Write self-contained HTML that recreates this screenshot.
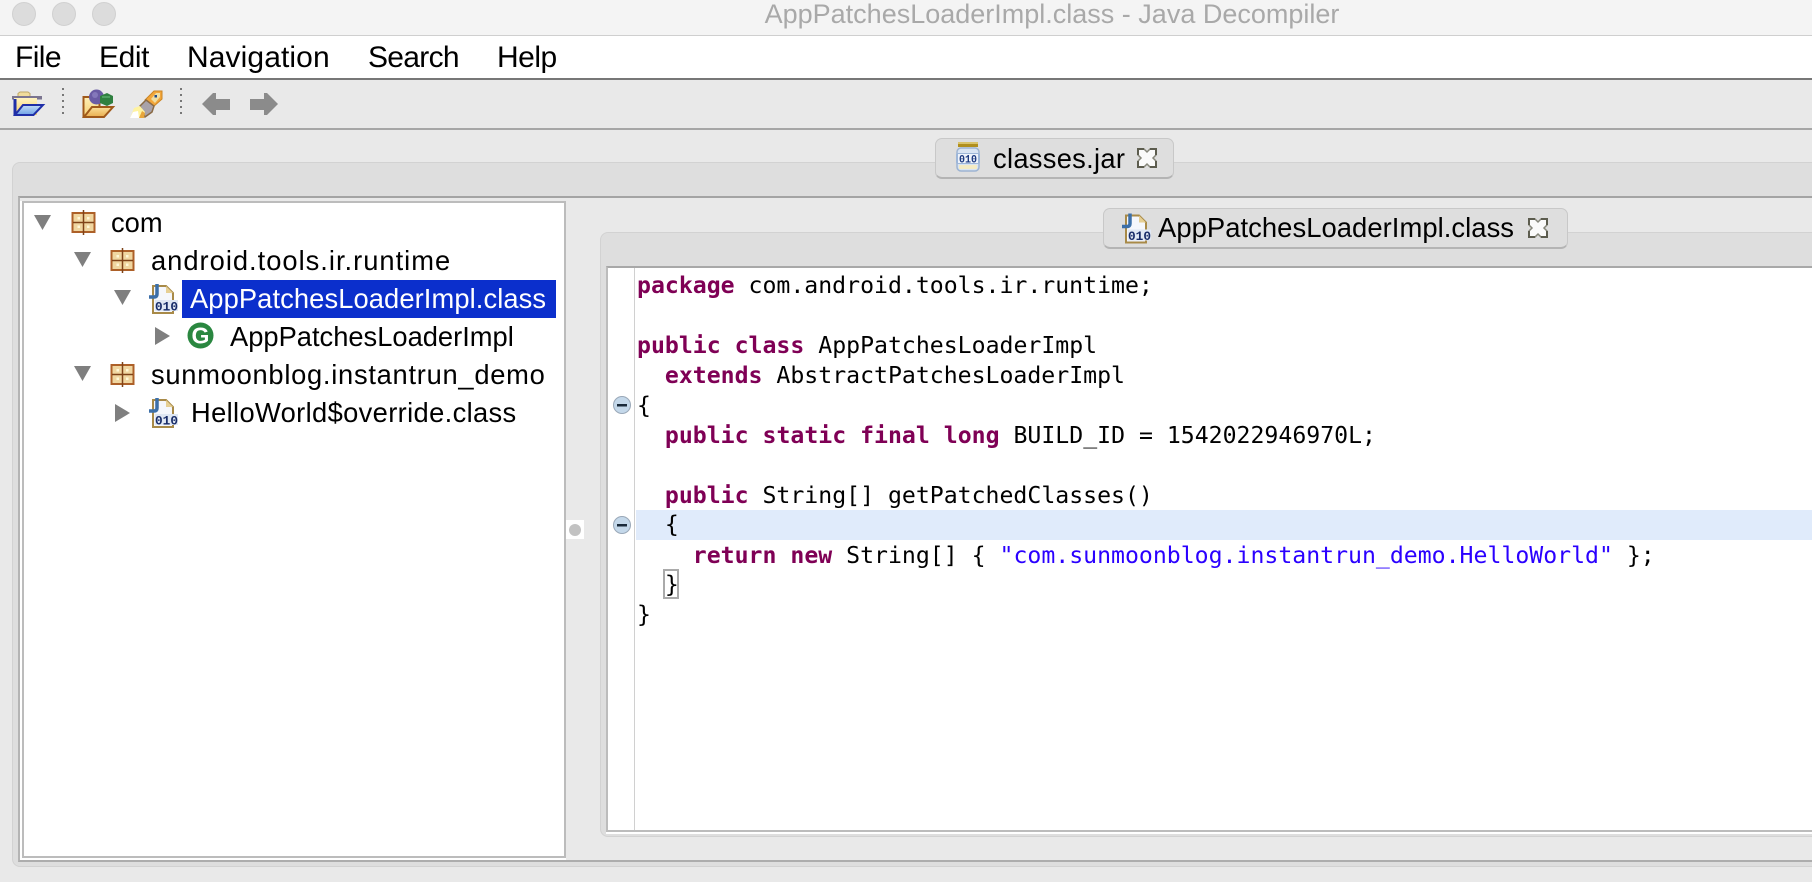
<!DOCTYPE html>
<html><head><meta charset="utf-8"><title>Java Decompiler</title>
<style>
html,body{margin:0;padding:0;width:1812px;height:882px;overflow:hidden;background:#e9e9e9;}
body{position:relative;font-family:"Liberation Sans",sans-serif;color:#000;}
.a{position:absolute;box-sizing:border-box;}
.t{position:absolute;white-space:pre;line-height:38px;font-size:27.3px;height:38px;}
.m{position:absolute;white-space:pre;top:36px;line-height:43px;font-size:30px;height:43px;}
.c{position:absolute;left:637px;white-space:pre;font:23.17px/30px "DejaVu Sans Mono",monospace;height:30px;}
.c b{color:#7f0055;font-weight:bold;}
.c i{color:#2a00ff;font-style:normal;}
svg{position:absolute;overflow:visible;}
</style></head><body>

<!-- title bar -->
<div class="a" style="left:0;top:0;width:1812px;height:36px;background:#f4f4f4;border-bottom:1px solid #cfcfcf"></div>
<div class="a" style="left:12px;top:2px;width:24px;height:24px;border-radius:50%;background:#dcdcdc;border:1px solid #d0d0d0"></div>
<div class="a" style="left:52px;top:2px;width:24px;height:24px;border-radius:50%;background:#dcdcdc;border:1px solid #d0d0d0"></div>
<div class="a" style="left:92px;top:2px;width:24px;height:24px;border-radius:50%;background:#dcdcdc;border:1px solid #d0d0d0"></div>
<div class="a" style="left:764px;top:0;width:576px;height:30px;line-height:29px;font-size:27px;color:#a9a9a9;white-space:pre;text-align:center">AppPatchesLoaderImpl.class - Java Decompiler</div>

<!-- menu -->
<div class="a" style="left:0;top:36px;width:1812px;height:44px;background:#fff;border-bottom:2px solid #777"></div>
<div class="m" style="left:15px;letter-spacing:-.6px">File</div>
<div class="m" style="left:99px;letter-spacing:-.4px">Edit</div>
<div class="m" style="left:187px;letter-spacing:.1px">Navigation</div>
<div class="m" style="left:368px;letter-spacing:-.7px">Search</div>
<div class="m" style="left:497px;letter-spacing:-.5px">Help</div>

<!-- toolbar -->
<div class="a" style="left:0;top:80px;width:1812px;height:50px;background:#e9e9e9;border-bottom:2px solid #a6a6a6"></div>
<svg style="left:12px;top:92px" width="32" height="24" viewBox="0 0 32 24">
  <defs>
    <linearGradient id="fy" x1="0" y1="0" x2="0" y2="1"><stop offset="0" stop-color="#fff3bf"/><stop offset="1" stop-color="#f6cf70"/></linearGradient>
    <linearGradient id="fb" x1="0" y1="0" x2="0" y2="1"><stop offset="0" stop-color="#c4def8"/><stop offset="1" stop-color="#6ea0e6"/></linearGradient>
    <linearGradient id="fg" x1="0" y1="0" x2="0" y2="1"><stop offset="0" stop-color="#fbe09a"/><stop offset="1" stop-color="#e9ae4e"/></linearGradient>
  </defs>
  <path d="M6 5V1.500L8 0h8l2 1.500V5z" fill="#f0dc9c" stroke="#c0a868" stroke-width="1"/>
  <rect x="0" y="4" width="30" height="3.500" fill="#7b7590"/>
  <path d="M2 6h23v17H2z" fill="url(#fy)" stroke="#1f2fa8" stroke-width="0"/>
  <path d="M3 7v16" stroke="#1f2fa8" stroke-width="3"/>
  <path d="M11 13h20l-9.500 10H3z" fill="url(#fb)" stroke="#1f2fa8" stroke-width="2"/>
</svg>
<svg style="left:62px;top:88px" width="2" height="26"><g fill="#777"><rect width="2" height="2" y="0"/><rect width="2" height="2" y="6"/><rect width="2" height="2" y="12"/><rect width="2" height="2" y="18"/><rect width="2" height="2" y="24"/></g></svg>
<svg style="left:82px;top:90px" width="32" height="28" viewBox="0 0 32 28">
  <path d="M1.500 27V7h6l2-2h8v22z" fill="url(#fy)" stroke="#a0591a" stroke-width="2"/>
  <circle cx="14.500" cy="7" r="7.500" fill="#6a5ba4"/>
  <circle cx="13" cy="5" r="3" fill="#8478ba"/>
  <path d="M25 3l6 3v7l-6 3-7-3V6z" fill="#2f8040"/>
  <rect x="20" y="6" width="8" height="2" fill="#4ea060"/>
  <path d="M10 17h21l-9 10H2z" fill="url(#fg)" stroke="#a0591a" stroke-width="2"/>
</svg>
<svg style="left:130px;top:90px" width="32" height="28" viewBox="0 0 32 28">
  <path d="M15 10L24 1h8v8l-9 8z" fill="#f2a63a" stroke="#cc8522" stroke-width="1"/>
  <path d="M21 9l5-6h4v4l-5 6z" fill="#f0dda0"/>
  <rect x="24.500" y="5" width="2.500" height="2.500" fill="#234a8a"/>
  <path d="M10 16l6-6 8 6-2 6-7 5z" fill="#a8a2aa" stroke="#8a6a44" stroke-width="1.500"/>
  <path d="M0 28l4-10 6-2 5 6-2 6z" fill="#fff3a0"/>
  <path d="M0 28l3-6 5-1 1 7z" fill="#ffffff"/>
  <path d="M9 28h5l1-5-3-2z" fill="#e7a63c"/>
</svg>
<svg style="left:180px;top:88px" width="2" height="26"><g fill="#777"><rect width="2" height="2" y="0"/><rect width="2" height="2" y="6"/><rect width="2" height="2" y="12"/><rect width="2" height="2" y="18"/><rect width="2" height="2" y="24"/></g></svg>
<svg style="left:202px;top:92px" width="28" height="24" viewBox="0 0 28 24"><path d="M0 12L11 1h3v6h14v11H14v5h-3z" fill="#8b8b8b"/></svg>
<svg style="left:250px;top:92px" width="28" height="24" viewBox="0 0 28 24"><path d="M28 12L17 1h-3v6H0v11h14v5h3z" fill="#8b8b8b"/></svg>

<!-- outer tab panel -->
<div class="a" style="left:12px;top:162px;width:1810px;height:705px;background:#dedede;border:1px solid #d2d2d2;border-radius:8px 0 0 8px"></div>
<div class="a" style="left:18px;top:196px;width:1794px;height:666px;background:#e9e9e9;border-top:2px solid #a4a4a4;border-bottom:2px solid #adadad;border-left:2px solid #b4b4b4"></div>

<!-- outer tab -->
<div class="a" style="left:935px;top:138px;width:239px;height:41px;background:#dedede;border:1px solid #c8c8c8;border-bottom:2px solid #b4b4b4;border-radius:7px"></div>
<svg style="left:956px;top:142px" width="24" height="30" viewBox="0 0 24 30">
  <rect x="2" y="0" width="20" height="2" fill="#d9c36a"/><rect x="2" y="2" width="20" height="3" fill="#b08f1e"/>
  <rect x="1" y="6" width="22" height="23" rx="4" fill="#d9e4f3" stroke="#9db4d2" stroke-width="1.5"/>
  <rect x="0" y="11" width="24" height="11" rx="2" fill="#9db6d8"/>
  <rect x="2" y="12" width="20" height="9" fill="#eef3fb"/>
  <rect x="3" y="23" width="18" height="4" fill="#f4ebc4"/>
  <text x="3" y="20.500" font-family="Liberation Mono,monospace" font-weight="bold" font-size="11" fill="#1d3a80" textLength="18" lengthAdjust="spacingAndGlyphs">010</text>
</svg>
<div class="a" style="left:993px;top:139px;height:40px;line-height:40px;font-size:27.3px;white-space:pre;letter-spacing:.3px">classes.jar</div>
<svg style="left:1137px;top:148px" width="20" height="20" viewBox="0 0 20 20">
  <path d="M1 1h6l3 3 3-3h6v6l-3 3 3 3v6h-6l-3-3-3 3H1v-6l3-3-3-3z" fill="#fafafa" stroke="#86867a" stroke-width="1.500"/>
  <path d="M1 7V1h6M13 1h6v6M19 13v6h-6M7 19H1v-6" fill="none" stroke="#5c5c4e" stroke-width="2"/>
</svg>

<!-- tree -->
<div class="a" style="left:20px;top:201px;width:546px;height:659px;background:#fff"></div>
<div class="a" style="left:22px;top:201px;width:544px;height:657px;background:#fff;border:2px solid #bcbcbc"></div>
<div class="a" style="left:182px;top:280px;width:374px;height:38px;background:#0b2fcc"></div>

<svg style="left:34px;top:215px" width="17" height="15"><path d="M0 0h17L8.500 15z" fill="#7f7f7f"/></svg>
<svg style="left:74px;top:252px" width="17" height="15"><path d="M0 0h17L8.500 15z" fill="#7f7f7f"/></svg>
<svg style="left:114px;top:290px" width="17" height="15"><path d="M0 0h17L8.500 15z" fill="#7f7f7f"/></svg>
<svg style="left:155px;top:327px" width="15" height="18"><path d="M0 0l15 9L0 18z" fill="#7f7f7f"/></svg>
<svg style="left:74px;top:366px" width="17" height="15"><path d="M0 0h17L8.500 15z" fill="#7f7f7f"/></svg>
<svg style="left:115px;top:404px" width="15" height="18"><path d="M0 0l15 9L0 18z" fill="#7f7f7f"/></svg>

<svg style="left:71px;top:210px" width="25" height="25" viewBox="0 0 25 25">
  <rect x="1.500" y="3" width="22" height="19" fill="#f0d6a0" stroke="#ad6028" stroke-width="2"/>
  <path d="M12.500 0v25M2 12.500h21" stroke="#7f4318" stroke-width="1.500"/>
  <g fill="#fff8d8"><rect x="6.500" y="7" width="2.500" height="2.500"/><rect x="16" y="7" width="2.500" height="2.500"/><rect x="6.500" y="15.500" width="2.500" height="2.500"/><rect x="16" y="15.500" width="2.500" height="2.500"/></g>
</svg>
<svg style="left:110px;top:248px" width="25" height="25" viewBox="0 0 25 25">
  <rect x="1.500" y="3" width="22" height="19" fill="#f0d6a0" stroke="#ad6028" stroke-width="2"/>
  <path d="M12.500 0v25M2 12.500h21" stroke="#7f4318" stroke-width="1.500"/>
  <g fill="#fff8d8"><rect x="6.500" y="7" width="2.500" height="2.500"/><rect x="16" y="7" width="2.500" height="2.500"/><rect x="6.500" y="15.500" width="2.500" height="2.500"/><rect x="16" y="15.500" width="2.500" height="2.500"/></g>
</svg>
<svg style="left:110px;top:362px" width="25" height="25" viewBox="0 0 25 25">
  <rect x="1.500" y="3" width="22" height="19" fill="#f0d6a0" stroke="#ad6028" stroke-width="2"/>
  <path d="M12.500 0v25M2 12.500h21" stroke="#7f4318" stroke-width="1.500"/>
  <g fill="#fff8d8"><rect x="6.500" y="7" width="2.500" height="2.500"/><rect x="16" y="7" width="2.500" height="2.500"/><rect x="6.500" y="15.500" width="2.500" height="2.500"/><rect x="16" y="15.500" width="2.500" height="2.500"/></g>
</svg>

<svg style="left:147px;top:284px" width="31" height="30" viewBox="0 0 31 30">
  <path d="M6 2h13l7 7v20H6z" fill="#f5f7fc" stroke="#a88a48" stroke-width="2"/>
  <path d="M19 2l7 7h-7z" fill="#e6cf94"/>
  <path d="M10 0v10q0 3-3 3H2" fill="none" stroke="#3c6fa8" stroke-width="3.500"/>
  <rect x="8" y="16" width="23" height="11" fill="#dfe7f3"/>
  <text x="8" y="26.500" font-family="Liberation Mono,monospace" font-weight="bold" font-size="12.500" fill="#182c68" textLength="23" lengthAdjust="spacingAndGlyphs">010</text>
</svg>
<svg style="left:187px;top:322px" width="27" height="27" viewBox="0 0 27 27">
  <circle cx="13.500" cy="13.500" r="13" fill="#2a8740"/>
  <text x="13.500" y="21.500" text-anchor="middle" font-family="Liberation Sans,sans-serif" font-weight="bold" font-size="23" fill="#fff">G</text>
</svg>
<svg style="left:147px;top:398px" width="31" height="30" viewBox="0 0 31 30">
  <path d="M6 2h13l7 7v20H6z" fill="#f5f7fc" stroke="#a88a48" stroke-width="2"/>
  <path d="M19 2l7 7h-7z" fill="#e6cf94"/>
  <path d="M10 0v10q0 3-3 3H2" fill="none" stroke="#3c6fa8" stroke-width="3.500"/>
  <rect x="8" y="16" width="23" height="11" fill="#dfe7f3"/>
  <text x="8" y="26.500" font-family="Liberation Mono,monospace" font-weight="bold" font-size="12.500" fill="#182c68" textLength="23" lengthAdjust="spacingAndGlyphs">010</text>
</svg>

<div class="t" style="left:111px;top:204px">com</div>
<div class="t" style="left:151px;top:242px;letter-spacing:1px">android.tools.ir.runtime</div>
<div class="t" style="left:190px;top:280px;color:#fff;letter-spacing:.1px">AppPatchesLoaderImpl.class</div>
<div class="t" style="left:230px;top:318px">AppPatchesLoaderImpl</div>
<div class="t" style="left:151px;top:356px;letter-spacing:.73px">sunmoonblog.instantrun_demo</div>
<div class="t" style="left:191px;top:394px;letter-spacing:.36px">HelloWorld$override.class</div>

<!-- splitter -->
<div class="a" style="left:566px;top:520px;width:18px;height:19px;background:#fff"></div>
<div class="a" style="left:569px;top:524px;width:12px;height:12px;border-radius:50%;background:#c2c2c2"></div>

<!-- inner tab panel -->
<div class="a" style="left:600px;top:232px;width:1222px;height:605px;background:#dedede;border:1px solid #d2d2d2;border-radius:8px 0 0 8px"></div>
<div class="a" style="left:606px;top:266px;width:1206px;height:568px;background:#fff"></div>
<div class="a" style="left:606px;top:266px;width:1216px;height:566px;background:#fff;border:2px solid #bcbcbc;border-top-color:#a8a8a8"></div>

<!-- inner tab -->
<div class="a" style="left:1103px;top:208px;width:465px;height:41px;background:#dedede;border:1px solid #c8c8c8;border-bottom:2px solid #b4b4b4;border-radius:7px"></div>
<svg style="left:1120px;top:213px" width="31" height="31" viewBox="0 0 31 30">
  <path d="M6 2h13l7 7v20H6z" fill="#f5f7fc" stroke="#a88a48" stroke-width="2"/>
  <path d="M19 2l7 7h-7z" fill="#e6cf94"/>
  <path d="M10 0v10q0 3-3 3H2" fill="none" stroke="#3c6fa8" stroke-width="3.500"/>
  <rect x="8" y="16" width="23" height="11" fill="#dfe7f3"/>
  <text x="8" y="26.500" font-family="Liberation Mono,monospace" font-weight="bold" font-size="12.500" fill="#182c68" textLength="23" lengthAdjust="spacingAndGlyphs">010</text>
</svg>
<div class="a" style="left:1158px;top:208px;height:40px;line-height:40px;font-size:27.4px;white-space:pre;letter-spacing:.05px">AppPatchesLoaderImpl.class</div>
<svg style="left:1528px;top:218px" width="20" height="20" viewBox="0 0 20 20">
  <path d="M1 1h6l3 3 3-3h6v6l-3 3 3 3v6h-6l-3-3-3 3H1v-6l3-3-3-3z" fill="#fafafa" stroke="#86867a" stroke-width="1.500"/>
  <path d="M1 7V1h6M13 1h6v6M19 13v6h-6M7 19H1v-6" fill="none" stroke="#5c5c4e" stroke-width="2"/>
</svg>

<!-- code -->
<div class="a" style="left:634px;top:268px;width:1px;height:562px;background:#d0d0d0"></div>
<div class="a" style="left:636px;top:510px;width:1176px;height:30px;background:#e0ebfb"></div>
<div class="a" style="left:663px;top:569px;width:16px;height:30px;border:2px solid #aaa"></div>

<svg style="left:613px;top:396px" width="18" height="18" viewBox="0 0 18 18">
  <circle cx="9" cy="9" r="8.500" fill="#c4d8ea" stroke="#9aa8b8"/>
  <rect x="4" y="8" width="10" height="2.500" fill="#1a2a3a"/>
</svg>
<svg style="left:613px;top:516px" width="18" height="18" viewBox="0 0 18 18">
  <circle cx="9" cy="9" r="8.500" fill="#c4d8ea" stroke="#9aa8b8"/>
  <rect x="4" y="8" width="10" height="2.500" fill="#1a2a3a"/>
</svg>

<div class="c" style="top:271px"><b>package</b> com.android.tools.ir.runtime;</div>
<div class="c" style="top:331px"><b>public</b> <b>class</b> AppPatchesLoaderImpl</div>
<div class="c" style="top:361px">  <b>extends</b> AbstractPatchesLoaderImpl</div>
<div class="c" style="top:391px">{</div>
<div class="c" style="top:421px">  <b>public</b> <b>static</b> <b>final</b> <b>long</b> BUILD_ID = 1542022946970L;</div>
<div class="c" style="top:481px">  <b>public</b> String[] getPatchedClasses()</div>
<div class="c" style="top:510px">  {</div>
<div class="c" style="top:541px">    <b>return</b> <b>new</b> String[] { <i>"com.sunmoonblog.instantrun_demo.HelloWorld"</i> };</div>
<div class="c" style="top:570px">  }</div>
<div class="c" style="top:600px">}</div>

</body></html>
